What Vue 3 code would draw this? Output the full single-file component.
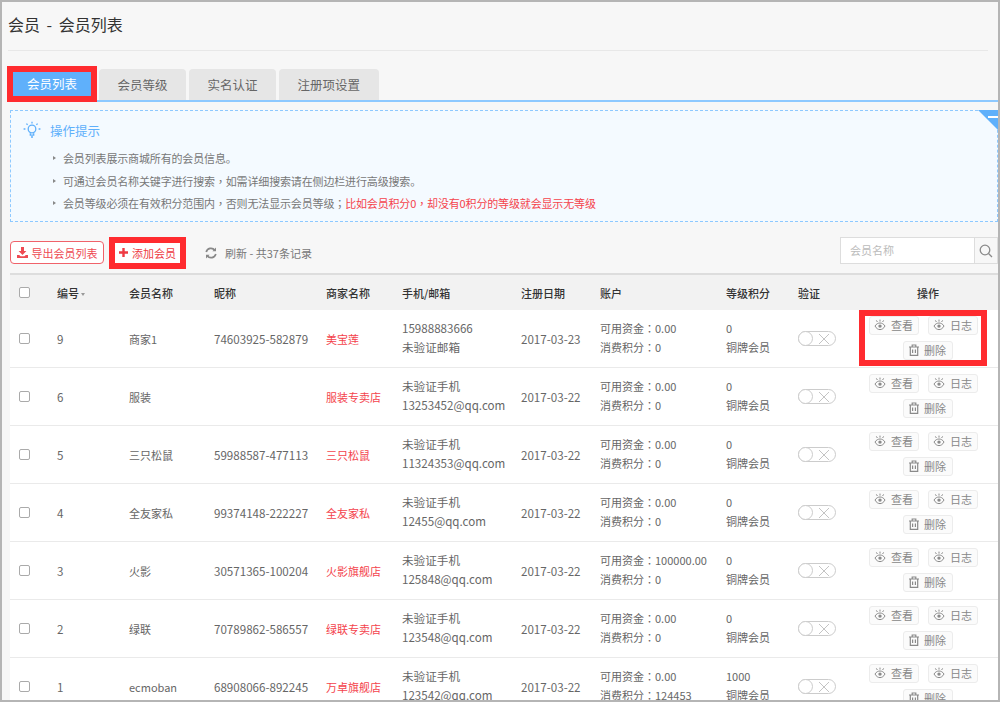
<script setup>
const tabs = ["会员列表", "会员等级", "实名认证", "注册项设置"];

const members = [
  { id: 9, name: "商家1", nick: "74603925-582879", shop: "美宝莲", phone: "15988883666", mail: "未验证邮箱", date: "2017-03-23", money: "0.00", points: "0", level: "0" },
  { id: 6, name: "服装", nick: "", shop: "服装专卖店", phone: "未验证手机", mail: "13253452@qq.com", date: "2017-03-22", money: "0.00", points: "0", level: "0" },
  { id: 5, name: "三只松鼠", nick: "59988587-477113", shop: "三只松鼠", phone: "未验证手机", mail: "11324353@qq.com", date: "2017-03-22", money: "0.00", points: "0", level: "0" },
  { id: 4, name: "全友家私", nick: "99374148-222227", shop: "全友家私", phone: "未验证手机", mail: "12455@qq.com", date: "2017-03-22", money: "0.00", points: "0", level: "0" },
  { id: 3, name: "火影", nick: "30571365-100204", shop: "火影旗舰店", phone: "未验证手机", mail: "125848@qq.com", date: "2017-03-22", money: "100000.00", points: "0", level: "0" },
  { id: 2, name: "绿联", nick: "70789862-586557", shop: "绿联专卖店", phone: "未验证手机", mail: "123548@qq.com", date: "2017-03-22", money: "0.00", points: "0", level: "0" },
  { id: 1, name: "ecmoban", nick: "68908066-892245", shop: "万卓旗舰店", phone: "未验证手机", mail: "123542@qq.com", date: "2017-03-22", money: "0.00", points: "124453", level: "1000" },
];
</script>

<template>
  <div class="frame">
    <div class="pageTitle">会员 - 会员列表</div>

    <!-- TABS -->
    <div class="tabs">
      <div v-for="(tab, i) in tabs" :key="tab" class="tab" :class="{ active: i === 0 }">{{ tab }}</div>
    </div>

    <!-- TIPS -->
    <div class="tips">
      <svg class="corner" width="20" height="20" viewBox="0 0 20 20">
        <path d="M0 0H20V20Z" fill="#5fb0fb" />
        <path d="M10 7H20" stroke="#fff" stroke-width="2" />
      </svg>
      <div class="tipsHead">
        <svg width="18" height="18" viewBox="0 0 18 18" fill="none" stroke="#5fb0fb" stroke-width="1.3">
          <circle cx="9" cy="8" r="3.800" />
          <path d="M7.300 12.200v2h3.400v-2M8 16h2M9 .8v1.800M2.400 8H.6M17.400 8h-1.800M3.400 2.600l1.200 1.200M14.600 2.600l-1.200 1.200" />
        </svg>
        <span>操作提示</span>
      </div>
      <ul class="tipsList">
        <li>会员列表展示商城所有的会员信息。</li>
        <li>可通过会员名称关键字进行搜索<span class="punct">，</span>如需详细搜索请在侧边栏进行高级搜索。</li>
        <li>会员等级必须在有效积分范围内<span class="punct">，</span>否则无法显示会员等级<span class="punct">；</span><span class="red">比如会员积分0<span class="punct">，</span>却没有0积分的等级就会显示无等级</span></li>
      </ul>
    </div>

    <!-- TOOLBAR -->
    <div class="toolbar">
      <div class="btnExport">
        <svg width="11" height="11" viewBox="0 0 11 11" fill="#ee4a52">
          <path d="M4 0h3v4h2.400L5.500 8 1.600 4H4zM0 8h2.200l1.400 1.300h3.800L8.800 8H11v3H0z" />
        </svg>
        导出会员列表
      </div>
      <div class="btnAdd">
        <svg width="9" height="9" viewBox="0 0 9 9" fill="#ee3a42">
          <path d="M3.300 0h2.400v3.300H9v2.400H5.700V9H3.300V5.700H0V3.300h3.300z" />
        </svg>
        添加会员
      </div>
      <div class="refresh">
        <svg width="12" height="12" viewBox="0 0 12 12" fill="none" stroke="#888" stroke-width="1.700">
          <path d="M1.200 5A4.900 4.900 0 0 1 9.800 3.200M10.800 7A4.900 4.900 0 0 1 2.200 8.800" />
          <path d="M11 .6v3.600H7.400L11 .6zM1 11.400V7.800h3.600L1 11.400z" fill="#888" stroke="none" />
        </svg>
        <span>刷新 - 共37条记录</span>
      </div>
      <div class="search">
        <div class="searchInput">会员名称</div>
        <div class="searchBtn">
          <svg width="14" height="14" viewBox="0 0 14 14" fill="none" stroke="#8a8a8a" stroke-width="1.300">
            <circle cx="6" cy="6" r="4.800" />
            <path d="M9.500 9.500L13 13" />
          </svg>
        </div>
      </div>
    </div>

    <!-- MEMBER TABLE -->
    <table class="list">
      <colgroup>
        <col style="width: 47px" /><col style="width: 72px" /><col style="width: 85px" /><col style="width: 112px" />
        <col style="width: 76px" /><col style="width: 119px" /><col style="width: 79px" /><col style="width: 126px" />
        <col style="width: 72px" /><col style="width: 60px" /><col style="width: 140px" />
      </colgroup>
      <thead>
        <tr>
          <th><div class="check"></div></th>
          <th>编号<i class="caret"></i></th>
          <th>会员名称</th>
          <th>昵称</th>
          <th>商家名称</th>
          <th>手机/邮箱</th>
          <th>注册日期</th>
          <th>账户</th>
          <th>等级积分</th>
          <th>验证</th>
          <th class="center">操作</th>
        </tr>
      </thead>
      <tbody>
        <tr v-for="(m, i) in members" :key="m.id">
          <td><div class="check"></div></td>
          <td class="num">{{ m.id }}</td>
          <td>{{ m.name }}</td>
          <td class="num">{{ m.nick }}</td>
          <td class="red">{{ m.shop }}</td>
          <td class="num"><p>{{ m.phone }}</p><p>{{ m.mail }}</p></td>
          <td class="num">{{ m.date }}</td>
          <td><p>可用资金<span class="punct">：</span>{{ m.money }}</p><p>消费积分<span class="punct">：</span>{{ m.points }}</p></td>
          <td><p>{{ m.level }}</p><p>铜牌会员</p></td>
          <td>
            <div class="switch">
              <span class="knob"></span>
              <svg width="12" height="12" viewBox="0 0 12 12" stroke="#c4c4c4" stroke-width="1">
                <path d="M1 1l10 10M11 1L1 11" />
              </svg>
            </div>
          </td>
          <td>
            <div class="ops" :class="{ marked: i === 0 }">
              <div v-for="label in ['查看', '日志']" :key="label" class="opBtn">
                <svg width="12" height="12" viewBox="0 0 12 12" fill="none" stroke="#8a8a8a" stroke-width="1">
                  <path d="M1 7c1.400-2.200 3.200-3 5-3s3.600.8 5 3c-1.400 2.600-3.200 3.600-5 3.600S2.400 9.600 1 7z" />
                  <circle cx="6" cy="7.100" r="1.700" fill="#8a8a8a" stroke="none" />
                  <path d="M6 .6v2M2.400 1.400l1 1.600M9.600 1.400l-1 1.600" />
                </svg>
                {{ label }}
              </div>
              <div class="opBtn del">
                <svg width="10" height="12" viewBox="0 0 10 12" fill="none" stroke="#8a8a8a" stroke-width="1.200">
                  <path d="M0 3h10M3.200 3V1h3.600v2M1.300 3v8.400h7.400V3M3.600 5.500v3.600M6.400 5.500v3.600" />
                </svg>
                删除
              </div>
            </div>
          </td>
        </tr>
      </tbody>
    </table>
  </div>
</template>

<style>
html,
body {
  margin: 0;
  background: #f7f7f7;
}
</style>

<style scoped>
.frame {
  box-sizing: border-box;
  height: 702px;
  border: 2px solid #b5b5b5;
  padding-left: 8px;
  overflow: hidden;
  background: #f7f7f7;
  font-family: "Noto Sans CJK SC", "Liberation Sans", sans-serif;
  font-size: 11px;
  color: #666;
}
.punct {
  font-family: "Noto Sans CJK TC", sans-serif;
}

.pageTitle {
  height: 48px;
  margin: 0 10px 0 -2px;
  line-height: 44px;
  font-size: 16px;
  word-spacing: 3px;
  color: #333;
  border-bottom: 1px solid #e8e8e8;
}

.tabs {
  display: flex;
  gap: 3px;
  margin-top: 18px;
  border-bottom: 2px solid #8ec9ff;
}
.tab {
  height: 31px;
  line-height: 31px;
  padding: 0 18.5px;
  border-radius: 4px 4px 0 0;
  background: #e6e6e6;
  font-size: 12.500px;
  color: #666;
}
.tab.active {
  height: 30px;
  line-height: 30px;
  padding: 0 17px;
  margin-right: 2px;
  background: #5fb0fb;
  color: #fff;
  outline: 6px solid #ff2b2f;
  outline-offset: -3px;
  border-radius: 0;
}

.tips {
  position: relative;
  box-sizing: border-box;
  height: 112px;
  margin-top: 8px;
  padding: 10px 0 0 12px;
  border: 1px dashed #8ec9ff;
  background: #f4faff;
}
.corner {
  position: absolute;
  top: -1px;
  right: -1px;
}
.tipsHead {
  display: flex;
  align-items: center;
  gap: 9px;
  height: 18px;
  font-size: 12.500px;
  color: #5fb0fb;
}
.tipsList {
  list-style: none;
  margin: 8px 0 0;
  padding: 0 0 0 40px;
  font-size: 11px;
  letter-spacing: -0.15px;
  line-height: 22.500px;
  color: #777;
}
.tipsList li {
  position: relative;
}
.tipsList li::before {
  content: "";
  position: absolute;
  left: -10px;
  top: 9px;
  border: 2.500px solid transparent;
  border-left: 3px solid #888;
  border-right: 0;
}
.tipsList .red {
  color: #f4434c;
}

.toolbar {
  box-sizing: border-box;
  display: flex;
  align-items: center;
  height: 51px;
  padding-top: 10px;
}
.btnExport {
  box-sizing: border-box;
  display: flex;
  align-items: center;
  justify-content: center;
  gap: 4px;
  width: 94px;
  height: 23px;
  border: 1px solid #f0626a;
  border-radius: 4px;
  background: #fff;
  color: #ee4a52;
}
.btnAdd {
  box-sizing: border-box;
  display: flex;
  align-items: center;
  justify-content: center;
  gap: 4px;
  width: 65px;
  height: 20px;
  margin-left: 11px;
  background: #fff;
  color: #ee3a42;
  outline: 6px solid #ff2b2f;
}
.refresh {
  display: flex;
  align-items: center;
  gap: 8px;
  margin-left: 25px;
  color: #777;
}
.search {
  display: flex;
  box-sizing: border-box;
  width: 158px;
  height: 27px;
  margin: 0 0 4px auto;
  border: 1px solid #ddd;
  background: #fff;
}
.searchInput {
  flex: 1;
  padding-left: 9px;
  line-height: 25px;
  color: #bbb;
}
.searchBtn {
  display: flex;
  align-items: center;
  justify-content: center;
  width: 22px;
  border-left: 1px solid #ddd;
  background: #f7f7f7;
}

.list {
  width: 988px;
  table-layout: fixed;
  border-collapse: collapse;
  border-top: 2px solid #ddd;
}
.list th {
  height: 35px;
  padding: 0;
  background: #f2f2f2;
  text-align: left;
  font-weight: 500;
  color: #333;
}
.list th:first-child,
.list td:first-child {
  padding-left: 9px;
}
.list th.center {
  text-align: center;
}
.list td {
  height: 57px;
  padding: 0;
  background: #fff;
  border-bottom: 1px solid #eaeaea;
  vertical-align: middle;
}
.list td.num {
  font-size: 11.600px;
}
.list td.red {
  color: #f4434c;
}
.list p {
  margin: 0;
  line-height: 19px;
}
.list p:last-child {
  margin-bottom: 2px;
}
.check {
  box-sizing: border-box;
  width: 11px;
  height: 11px;
  border: 1px solid #aaa;
  border-radius: 2px;
  background: #fff;
}
.caret {
  display: inline-block;
  margin-left: 2px;
  vertical-align: middle;
  border: 2.500px solid transparent;
  border-top: 3px solid #999;
  border-bottom: 0;
}

.switch {
  box-sizing: border-box;
  display: flex;
  align-items: center;
  justify-content: flex-end;
  width: 38px;
  height: 15px;
  padding-right: 5px;
  border: 1px solid #ccc;
  border-radius: 8px;
  position: relative;
}
.knob {
  position: absolute;
  left: -1px;
  top: -1px;
  box-sizing: border-box;
  width: 15px;
  height: 15px;
  border: 1px solid #ccc;
  border-radius: 50%;
  background: #fff;
}

.ops {
  box-sizing: border-box;
  display: flex;
  flex-wrap: wrap;
  justify-content: center;
  gap: 6px 9px;
  width: 116px;
  margin: 0 0 2px 7px;
}
.ops.marked {
  outline: 6px solid #ff2b2f;
}
.opBtn {
  box-sizing: border-box;
  display: flex;
  align-items: center;
  justify-content: center;
  gap: 5px;
  width: 50px;
  height: 19px;
  border: 1px solid #ececec;
  border-radius: 3px;
  background: #fbfbfb;
  color: #888;
}
.opBtn.del {
  margin-left: 9px;
}
</style>
